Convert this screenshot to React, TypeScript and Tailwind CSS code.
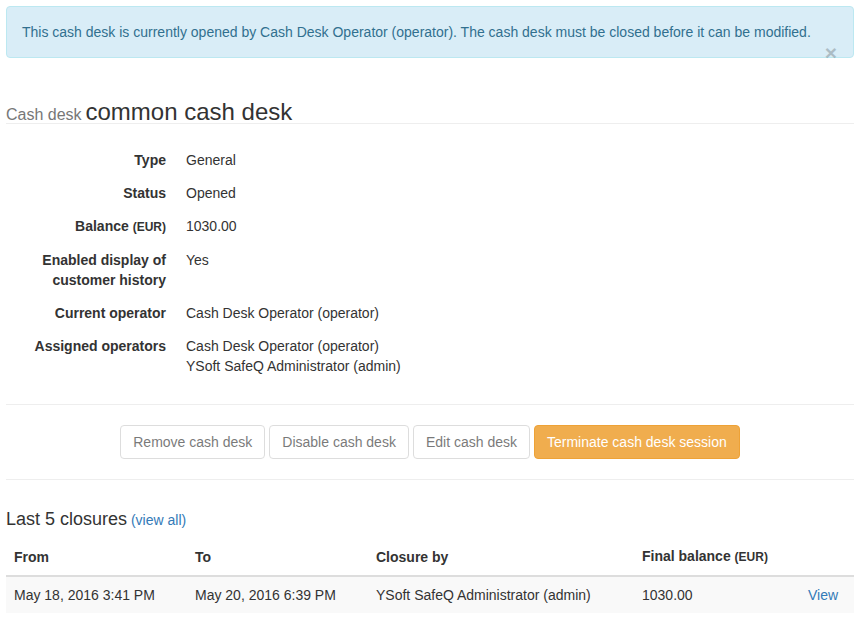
import React from "react";

const rows: { label: React.ReactNode; value: React.ReactNode }[] = [
  { label: "Type", value: "General" },
  { label: "Status", value: "Opened" },
  {
    label: (
      <>
        Balance <span className="text-[12px]">(EUR)</span>
      </>
    ),
    value: "1030.00",
  },
  {
    label: (
      <>
        Enabled display of
        <br />
        customer history
      </>
    ),
    value: "Yes",
  },
  { label: "Current operator", value: "Cash Desk Operator (operator)" },
  {
    label: "Assigned operators",
    value: (
      <>
        Cash Desk Operator (operator)
        <br />
        YSoft SafeQ Administrator (admin)
      </>
    ),
  },
];

export default function App() {
  return (
    <div
      className="min-h-[637px] bg-white px-[6px] pt-[6px] text-[14px] leading-[20px] text-[#333]"
      style={{ fontFamily: '"Liberation Sans", Arial, sans-serif' }}
    >
      {/* Alert */}
      <div className="relative rounded-[4px] border border-[#bce8f1] bg-[#d9edf7] py-[15px] pl-[15px] pr-[20px] text-[#31708f]">
        This cash desk is currently opened by Cash Desk Operator (operator). The cash desk must be closed before it can be
        modified.
        <span className="absolute right-[16px] top-[36px] text-[21px] font-bold leading-[20px] text-black opacity-20">
          ×
        </span>
      </div>

      {/* Page header */}
      <div className="mt-[39px] h-[27px] whitespace-nowrap border-b border-[#eee] pt-[2px]">
        <span className="text-[16px] leading-[26px] text-[#777]">Cash desk</span>{" "}
        <span className="text-[24px] leading-[26px] text-[#333]">common cash desk</span>
      </div>

      {/* Details */}
      <dl className="mt-[26px] flex flex-col gap-[13px]">
        {rows.map((r, i) => (
          <div key={i} className="flex">
            <dt className="w-[160px] shrink-0 text-right font-bold">{r.label}</dt>
            <dd className="ml-[20px]">{r.value}</dd>
          </div>
        ))}
      </dl>

      <div className="mt-[28px] border-t border-[#eee]" />

      {/* Buttons */}
      <div className="mt-[20px] flex justify-center gap-[4px]">
        {["Remove cash desk", "Disable cash desk", "Edit cash desk"].map((t) => (
          <button
            key={t}
            className="h-[34px] rounded-[4px] border border-[#ccc] bg-white px-[12px] text-[14px] text-[#333] opacity-65"
          >
            {t}
          </button>
        ))}
        <button className="h-[34px] rounded-[4px] border border-[#eea236] bg-[#f0ad4e] px-[12px] text-[14px] text-white">
          Terminate cash desk session
        </button>
      </div>

      <div className="mt-[20px] border-t border-[#eee]" />

      {/* Closures */}
      <div className="mt-[29px] leading-[20px]">
        <span className="text-[18px] text-[#333]">Last 5 closures</span>{" "}
        <span className="text-[14px] text-[#337ab7]">(view all)</span>
      </div>

      <table className="mt-[8px] w-full table-fixed border-collapse">
        <colgroup>
          <col className="w-[181px]" />
          <col className="w-[181px]" />
          <col className="w-[266px]" />
          <col className="w-[166px]" />
          <col />
        </colgroup>
        <thead>
          <tr className="border-b-2 border-[#ddd]">
            <th className="p-[8px] text-left font-bold">From</th>
            <th className="p-[8px] text-left font-bold">To</th>
            <th className="p-[8px] text-left font-bold">Closure by</th>
            <th className="p-[8px] text-left font-bold">
              Final balance <span className="text-[12px]">(EUR)</span>
            </th>
            <th className="p-[8px]" />
          </tr>
        </thead>
        <tbody>
          <tr className="bg-[#f9f9f9]">
            <td className="p-[8px]">May 18, 2016 3:41 PM</td>
            <td className="p-[8px]">May 20, 2016 6:39 PM</td>
            <td className="p-[8px]">YSoft SafeQ Administrator (admin)</td>
            <td className="p-[8px]">1030.00</td>
            <td className="p-[8px] text-[#337ab7]">View</td>
          </tr>
        </tbody>
      </table>
    </div>
  );
}
